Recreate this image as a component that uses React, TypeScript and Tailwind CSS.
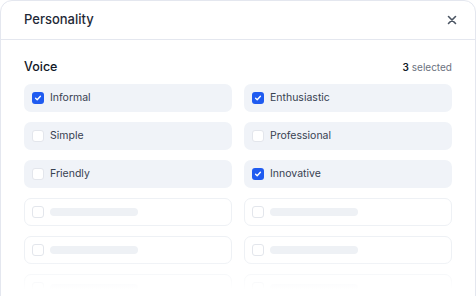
import React from "react";

const items: { label: string | null; checked: boolean }[] = [
  { label: "Informal", checked: true },
  { label: "Enthusiastic", checked: true },
  { label: "Simple", checked: false },
  { label: "Professional", checked: false },
  { label: "Friendly", checked: false },
  { label: "Innovative", checked: true },
  { label: null, checked: false },
  { label: null, checked: false },
  { label: null, checked: false },
  { label: null, checked: false },
  { label: null, checked: false },
  { label: null, checked: false },
];

function Box({ checked }: { checked: boolean }) {
  if (checked) {
    return (
      <span className="flex h-[12px] w-[12px] items-center justify-center rounded-[3px] bg-[#1f5bf0]">
        <svg width="8" height="8" viewBox="0 0 8 8" fill="none">
          <path d="M1.6 4.2 L3.2 5.7 L6.4 2.3" stroke="white" strokeWidth="1.4" strokeLinecap="round" strokeLinejoin="round" />
        </svg>
      </span>
    );
  }
  return <span className="h-[12px] w-[12px] rounded-[3px] border border-[#e3e6ec] bg-white" />;
}

export default function App() {
  return (
    <div className="h-[296px] w-[476px] overflow-hidden bg-white" style={{ fontFamily: "Inter, 'Noto Sans', sans-serif" }}>
      <div className="relative h-[320px] w-[476px] rounded-t-[12px] border border-[#e4e7ef] bg-white">
        <div className="flex h-[39px] items-center justify-between border-b border-[#e4e7ef] pl-[23px] pr-[16px]">
          <span className="text-[13px] font-medium text-[#1f2937]">Personality</span>
          <svg width="10" height="10" viewBox="0 0 10 10" className="mr-[2px]">
            <path d="M1.5 1.5 L8.5 8.5 M8.5 1.5 L1.5 8.5" stroke="#4b5563" strokeWidth="1.6" strokeLinecap="round" />
          </svg>
        </div>
        <div className="px-[23px] pt-[18px]">
          <div className="flex items-center justify-between">
            <span className="text-[12.5px] font-medium text-[#111827]">Voice</span>
            <span className="text-[10px] text-[#6b7280]">
              <span className="font-semibold text-[#111827]">3</span> selected
            </span>
          </div>
          <div className="mt-[7px] grid grid-cols-2 gap-x-[12px] gap-y-[10px]">
            {items.map((it, i) =>
              it.label ? (
                <div key={i} className="flex h-[28px] items-center gap-[6px] rounded-[7px] bg-[#f0f3f8] pl-[8px]">
                  <Box checked={it.checked} />
                  <span className="text-[10.5px] text-[#374151]">{it.label}</span>
                </div>
              ) : (
                <div key={i} className="flex h-[28px] items-center gap-[6px] rounded-[7px] border border-[#eef1f5] bg-white pl-[7px]">
                  <Box checked={false} />
                  <span className="h-[8px] w-[88px] rounded-full bg-[#eef1f5]" />
                </div>
              )
            )}
          </div>
        </div>
        <div className="pointer-events-none absolute left-0 right-0 top-[258px] h-[30px] bg-gradient-to-b from-white/0 to-white" />
        <div className="pointer-events-none absolute left-0 right-0 top-[288px] h-[40px] bg-white" />
      </div>
    </div>
  );
}
